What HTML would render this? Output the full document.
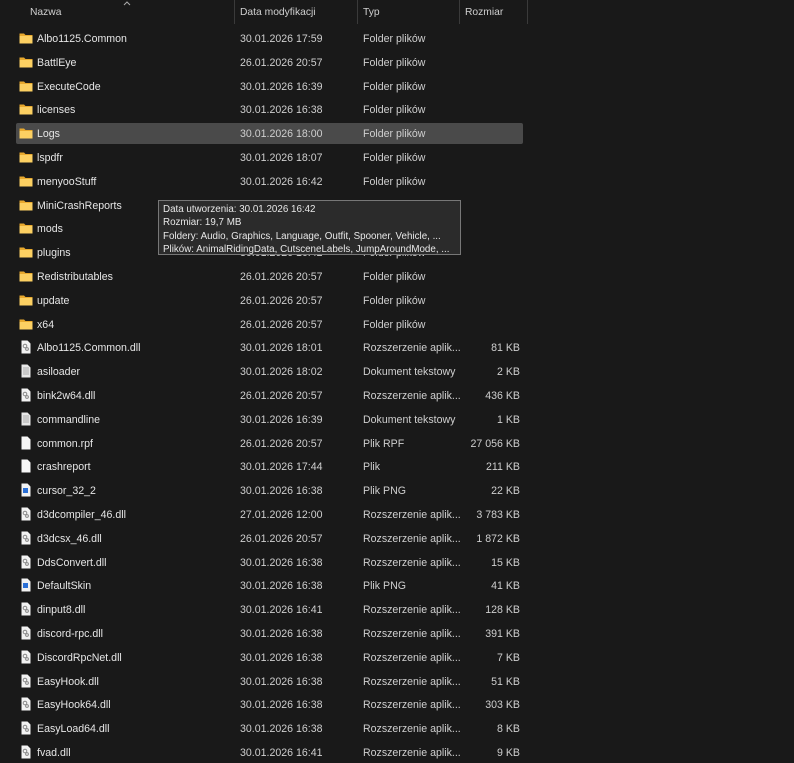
<!DOCTYPE html>
<html><head><meta charset="utf-8"><style>
html,body{margin:0;padding:0;background:#191919;width:794px;height:750px;overflow:hidden;font-family:"Liberation Sans",sans-serif;font-size:10.6px;color:#dcdcdc}
.hdr{position:absolute;left:0;top:0;width:794px;height:24px}
.hdr span{position:absolute;top:7px;color:#d0d0d0;font-size:10.3px}
.div{position:absolute;top:0;width:1px;height:24px;background:#3a3a3a}
.row{position:absolute;left:16px;width:507px;height:21px}
.row .n{position:absolute;left:21px;top:5px;color:#e6e6e6;white-space:nowrap}
.row .d{position:absolute;left:224px;top:5px;color:#cfcfcf}
.row .t{position:absolute;left:347px;top:5px;color:#cfcfcf;white-space:nowrap}
.row .s{position:absolute;right:3px;top:5px;color:#cfcfcf}
.row svg{position:absolute;left:3px;top:3px}
.sel{background:#4a4a4a;border-radius:2px}
.tip{position:absolute;left:158px;top:200px;width:303px;height:55px;background:#2b2b2b;border:1px solid #777;color:#e8e8e8;font-size:9.8px;line-height:13.3px;padding:2px 0 0 4px;box-sizing:border-box;white-space:nowrap;overflow:hidden}
</style></head><body>
<div class="hdr">
<span style="left:30px">Nazwa</span>
<svg style="position:absolute;left:123px;top:1px" width="8" height="5"><path d="M1 4L4 1L7 4" fill="none" stroke="#aaa" stroke-width="1"/></svg>
<div class="div" style="left:234px"></div><span style="left:240px">Data modyfikacji</span>
<div class="div" style="left:357px"></div><span style="left:363px">Typ</span>
<div class="div" style="left:459px"></div><span style="left:465px">Rozmiar</span>
<div class="div" style="left:527px"></div>
</div>
<svg width="0" height="0" style="position:absolute"><defs>
<symbol id="fo" viewBox="0 0 14 14"><path d="M0.5 2.5h4.5l1.5 1.5h7v8.5h-13z" fill="#e8a92e"/><path d="M0.5 5h13v7.5h-13z" fill="#fcd062"/></symbol>
<symbol id="dl" viewBox="0 0 14 14"><path d="M2.5 0.5h6l3 3v10h-9z" fill="#f2f2f2"/><circle cx="6" cy="6" r="1.8" fill="none" stroke="#888" stroke-width="1"/><circle cx="8" cy="9" r="1.4" fill="none" stroke="#888" stroke-width="1"/></symbol>
<symbol id="tx" viewBox="0 0 14 14"><path d="M2.5 0.5h6l3 3v10h-9z" fill="#e8e8e8"/><path d="M4 4h6M4 6h6M4 8h6M4 10h6" stroke="#999" stroke-width="0.8"/></symbol>
<symbol id="bl" viewBox="0 0 14 14"><path d="M2.5 0.5h6l3 3v10h-9z" fill="#f6f6f6"/></symbol>
<symbol id="pn" viewBox="0 0 14 14"><path d="M2.5 0.5h6l3 3v10h-9z" fill="#f2f2f2"/><rect x="4" y="5" width="5" height="5" fill="#2a6fd6"/></symbol>
</defs></svg>
<div class="row" style="top:28px"><svg width="14" height="14"><use href="#fo"/></svg><span class="n">Albo1125.Common</span><span class="d">30.01.2026 17:59</span><span class="t">Folder plików</span></div>
<div class="row" style="top:51.8px"><svg width="14" height="14"><use href="#fo"/></svg><span class="n">BattlEye</span><span class="d">26.01.2026 20:57</span><span class="t">Folder plików</span></div>
<div class="row" style="top:75.6px"><svg width="14" height="14"><use href="#fo"/></svg><span class="n">ExecuteCode</span><span class="d">30.01.2026 16:39</span><span class="t">Folder plików</span></div>
<div class="row" style="top:99.4px"><svg width="14" height="14"><use href="#fo"/></svg><span class="n">licenses</span><span class="d">30.01.2026 16:38</span><span class="t">Folder plików</span></div>
<div class="row sel" style="top:123px"><svg width="14" height="14"><use href="#fo"/></svg><span class="n">Logs</span><span class="d">30.01.2026 18:00</span><span class="t">Folder plików</span></div>
<div class="row" style="top:147px"><svg width="14" height="14"><use href="#fo"/></svg><span class="n">lspdfr</span><span class="d">30.01.2026 18:07</span><span class="t">Folder plików</span></div>
<div class="row" style="top:170.7px"><svg width="14" height="14"><use href="#fo"/></svg><span class="n">menyooStuff</span><span class="d">30.01.2026 16:42</span><span class="t">Folder plików</span></div>
<div class="row" style="top:194.5px"><svg width="14" height="14"><use href="#fo"/></svg><span class="n">MiniCrashReports</span></div>
<div class="row" style="top:218.3px"><svg width="14" height="14"><use href="#fo"/></svg><span class="n">mods</span></div>
<div class="row" style="top:242.1px"><svg width="14" height="14"><use href="#fo"/></svg><span class="n">plugins</span><span class="d">30.01.2026 16:42</span><span class="t">Folder plików</span></div>
<div class="row" style="top:265.9px"><svg width="14" height="14"><use href="#fo"/></svg><span class="n">Redistributables</span><span class="d">26.01.2026 20:57</span><span class="t">Folder plików</span></div>
<div class="row" style="top:289.7px"><svg width="14" height="14"><use href="#fo"/></svg><span class="n">update</span><span class="d">26.01.2026 20:57</span><span class="t">Folder plików</span></div>
<div class="row" style="top:313.5px"><svg width="14" height="14"><use href="#fo"/></svg><span class="n">x64</span><span class="d">26.01.2026 20:57</span><span class="t">Folder plików</span></div>
<div class="row" style="top:337.3px"><svg width="14" height="14"><use href="#dl"/></svg><span class="n">Albo1125.Common.dll</span><span class="d">30.01.2026 18:01</span><span class="t">Rozszerzenie aplik...</span><span class="s">81 KB</span></div>
<div class="row" style="top:361.1px"><svg width="14" height="14"><use href="#tx"/></svg><span class="n">asiloader</span><span class="d">30.01.2026 18:02</span><span class="t">Dokument tekstowy</span><span class="s">2 KB</span></div>
<div class="row" style="top:384.9px"><svg width="14" height="14"><use href="#dl"/></svg><span class="n">bink2w64.dll</span><span class="d">26.01.2026 20:57</span><span class="t">Rozszerzenie aplik...</span><span class="s">436 KB</span></div>
<div class="row" style="top:408.7px"><svg width="14" height="14"><use href="#tx"/></svg><span class="n">commandline</span><span class="d">30.01.2026 16:39</span><span class="t">Dokument tekstowy</span><span class="s">1 KB</span></div>
<div class="row" style="top:432.5px"><svg width="14" height="14"><use href="#bl"/></svg><span class="n">common.rpf</span><span class="d">26.01.2026 20:57</span><span class="t">Plik RPF</span><span class="s">27 056 KB</span></div>
<div class="row" style="top:456.3px"><svg width="14" height="14"><use href="#bl"/></svg><span class="n">crashreport</span><span class="d">30.01.2026 17:44</span><span class="t">Plik</span><span class="s">211 KB</span></div>
<div class="row" style="top:480.1px"><svg width="14" height="14"><use href="#pn"/></svg><span class="n">cursor_32_2</span><span class="d">30.01.2026 16:38</span><span class="t">Plik PNG</span><span class="s">22 KB</span></div>
<div class="row" style="top:503.9px"><svg width="14" height="14"><use href="#dl"/></svg><span class="n">d3dcompiler_46.dll</span><span class="d">27.01.2026 12:00</span><span class="t">Rozszerzenie aplik...</span><span class="s">3 783 KB</span></div>
<div class="row" style="top:527.7px"><svg width="14" height="14"><use href="#dl"/></svg><span class="n">d3dcsx_46.dll</span><span class="d">26.01.2026 20:57</span><span class="t">Rozszerzenie aplik...</span><span class="s">1 872 KB</span></div>
<div class="row" style="top:551.5px"><svg width="14" height="14"><use href="#dl"/></svg><span class="n">DdsConvert.dll</span><span class="d">30.01.2026 16:38</span><span class="t">Rozszerzenie aplik...</span><span class="s">15 KB</span></div>
<div class="row" style="top:575.3px"><svg width="14" height="14"><use href="#pn"/></svg><span class="n">DefaultSkin</span><span class="d">30.01.2026 16:38</span><span class="t">Plik PNG</span><span class="s">41 KB</span></div>
<div class="row" style="top:599.1px"><svg width="14" height="14"><use href="#dl"/></svg><span class="n">dinput8.dll</span><span class="d">30.01.2026 16:41</span><span class="t">Rozszerzenie aplik...</span><span class="s">128 KB</span></div>
<div class="row" style="top:622.9px"><svg width="14" height="14"><use href="#dl"/></svg><span class="n">discord-rpc.dll</span><span class="d">30.01.2026 16:38</span><span class="t">Rozszerzenie aplik...</span><span class="s">391 KB</span></div>
<div class="row" style="top:646.7px"><svg width="14" height="14"><use href="#dl"/></svg><span class="n">DiscordRpcNet.dll</span><span class="d">30.01.2026 16:38</span><span class="t">Rozszerzenie aplik...</span><span class="s">7 KB</span></div>
<div class="row" style="top:670.5px"><svg width="14" height="14"><use href="#dl"/></svg><span class="n">EasyHook.dll</span><span class="d">30.01.2026 16:38</span><span class="t">Rozszerzenie aplik...</span><span class="s">51 KB</span></div>
<div class="row" style="top:694.3px"><svg width="14" height="14"><use href="#dl"/></svg><span class="n">EasyHook64.dll</span><span class="d">30.01.2026 16:38</span><span class="t">Rozszerzenie aplik...</span><span class="s">303 KB</span></div>
<div class="row" style="top:718.1px"><svg width="14" height="14"><use href="#dl"/></svg><span class="n">EasyLoad64.dll</span><span class="d">30.01.2026 16:38</span><span class="t">Rozszerzenie aplik...</span><span class="s">8 KB</span></div>
<div class="row" style="top:741.9px"><svg width="14" height="14"><use href="#dl"/></svg><span class="n">fvad.dll</span><span class="d">30.01.2026 16:41</span><span class="t">Rozszerzenie aplik...</span><span class="s">9 KB</span></div>
<div class="tip">Data utworzenia: 30.01.2026 16:42<br>Rozmiar: 19,7 MB<br>Foldery: Audio, Graphics, Language, Outfit, Spooner, Vehicle, ...<br>Plików: AnimalRidingData, CutsceneLabels, JumpAroundMode, ...</div>
</body></html>
